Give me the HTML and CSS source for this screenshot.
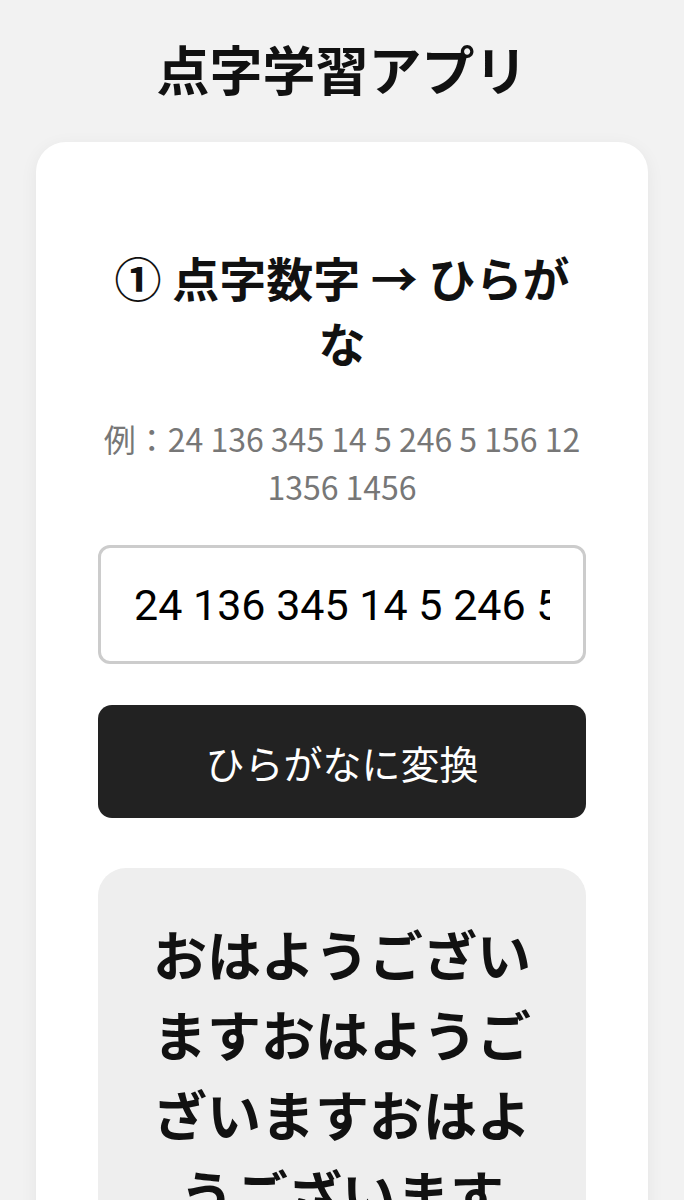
FILE: index.html
```html
<!DOCTYPE html>
<html lang="ja">
<head>
<meta charset="utf-8">
<title>点字学習アプリ</title>
<link rel="stylesheet" href="styles.css">
</head>
<body>
<div class="app">
  <h1 class="title">点字学習アプリ</h1>
  <section class="card">
    <h2 class="card-title">① 点字数字 → ひらがな</h2>
    <p class="example">例：24 136 345 14 5 246 5 156 12 1356 1456</p>
    <input class="code-input" type="text" value="24 136 345 14 5 246 5 156 12 1356 1456">
    <button class="convert-btn" type="button">ひらがなに変換</button>
    <div class="result">おはようございますおはようございますおはようございます</div>
  </section>
</div>
</body>
</html>
```

FILE: styles.css
```css
html, body {
  margin: 0;
  padding: 0;
  background: #f2f2f2;
  font-family: "Noto Sans CJK JP", "Noto Sans", sans-serif;
  color: #111;
}

.app {
  padding: 29px 36px 0;
}

.title {
  margin: 0 0 35px;
  font-size: 53px;
  line-height: 78px;
  font-weight: 700;
  text-align: center;
  color: #111;
}

.card {
  background: #fff;
  border-radius: 30px;
  padding: 102px 62px 60px;
  box-shadow: 0 4px 18px rgba(0, 0, 0, 0.06);
  display: flex;
  flex-direction: column;
}

.card-title {
  margin: 0;
  font-size: 47px;
  line-height: 65px;
  font-weight: 700;
  text-align: center;
  color: #111;
}

.example {
  margin: 40px 0 0;
  font-size: 32px;
  line-height: 48px;
  color: #777;
  text-align: center;
}

.code-input {
  margin-top: 35px;
  box-sizing: border-box;
  width: 100%;
  height: 119px;
  border: 3px solid #ccc;
  border-radius: 12px;
  padding: 0 33px 0 33px;
  font-family: Roboto, "Noto Sans CJK JP", sans-serif;
  font-size: 43px;
  color: #000;
  background: #fff;
  outline: none;
}

.convert-btn {
  margin-top: 41px;
  width: 100%;
  height: 113px;
  border: none;
  border-radius: 14px;
  background: #222;
  color: #fff;
  font-family: "Noto Sans CJK JP", sans-serif;
  font-size: 39px;
  font-weight: 400;
}

.result {
  margin-top: 50px;
  background: #eee;
  border-radius: 28px;
  padding: 46px 44px;
  font-size: 54px;
  line-height: 80px;
  font-weight: 700;
  text-align: center;
  color: #111;
}
```
